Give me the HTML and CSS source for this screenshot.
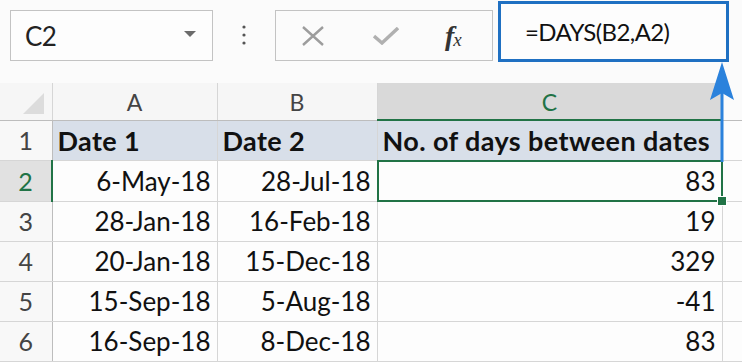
FILE: index.html
```html
<!DOCTYPE html>
<html lang="en">
<head>
    <meta charset="UTF-8">
    <title>DAYS formula</title>
    <link rel="stylesheet" href="styles.css">
</head>
<body>
    <div class="toolbar">
        <div class="namebox">
            <span>C2</span>
            <svg class="caret" width="14" height="8" viewBox="0 0 14 8"><path d="M1 1 H13 L7 7 Z" fill="#6b6b6b"/></svg>
        </div>
        <svg class="dots" width="6" height="24" viewBox="0 0 6 24">
            <circle cx="3" cy="3" r="1.6" fill="#555"/>
            <circle cx="3" cy="11" r="1.6" fill="#555"/>
            <circle cx="3" cy="19" r="1.6" fill="#555"/>
        </svg>
        <div class="fxbuttons">
            <svg class="icon-x" width="24" height="20" viewBox="0 0 24 20"><path d="M2 1 L22 19 M22 1 L2 19" stroke="#9d9d9d" stroke-width="2.4" fill="none"/></svg>
            <svg class="icon-check" width="26" height="18" viewBox="0 0 26 18"><path d="M1 9 L9 16 L25 1" stroke="#b0b0b0" stroke-width="3.4" fill="none"/></svg>
            <span class="fx">f<sub>x</sub></span>
        </div>
        <div class="formula">=DAYS(B2,A2)</div>
    </div>

    <table class="sheet">
        <colgroup>
            <col class="c-rh"><col class="c-a"><col class="c-b"><col class="c-c"><col class="c-d">
        </colgroup>
        <tr class="colhead">
            <th class="corner"><span class="tri"></span></th>
            <th>A</th>
            <th>B</th>
            <th class="active">C</th>
            <th class="blank"></th>
        </tr>
        <tr class="title">
            <th class="rh">1</th>
            <td>Date 1</td>
            <td>Date 2</td>
            <td>No. of days between dates</td>
            <td class="blank"></td>
        </tr>
        <tr class="r2">
            <th class="rh active">2</th>
            <td>6-May-18</td>
            <td>28-Jul-18</td>
            <td class="sel">83</td>
            <td class="blank"></td>
        </tr>
        <tr>
            <th class="rh">3</th>
            <td>28-Jan-18</td>
            <td>16-Feb-18</td>
            <td>19</td>
            <td class="blank"></td>
        </tr>
        <tr>
            <th class="rh">4</th>
            <td>20-Jan-18</td>
            <td>15-Dec-18</td>
            <td>329</td>
            <td class="blank"></td>
        </tr>
        <tr>
            <th class="rh">5</th>
            <td>15-Sep-18</td>
            <td>5-Aug-18</td>
            <td>-41</td>
            <td class="blank"></td>
        </tr>
        <tr>
            <th class="rh">6</th>
            <td>16-Sep-18</td>
            <td>8-Dec-18</td>
            <td>83</td>
            <td class="blank"></td>
        </tr>
    </table>

    <!-- arrow from the selected cell up to the formula bar -->
    <svg class="arrow" width="28" height="104" viewBox="0 0 28 104">
        <path d="M12 30 V102" stroke="#2b82dc" stroke-width="3" fill="none"/>
        <path d="M12 2 L24 40 L12 33 L0 40 Z" fill="#2b82dc"/>
    </svg>
</body>
</html>
```

FILE: styles.css
```css
body {
    margin: 0;
    width: 742px;
    height: 362px;
    overflow: hidden;
    position: relative;
    background-color: #fbfbfb;
    font-family: Lato, "Liberation Sans", sans-serif;
    color: #111;
}

.toolbar {
    display: flex;
    align-items: flex-start;
    height: 83px;
}

.namebox {
    box-sizing: border-box;
    margin: 10px 0 0 10px;
    width: 203px;
    height: 51px;
    border: 1px solid #c3c3c3;
    background-color: #fdfdfd;
    display: flex;
    align-items: center;
    justify-content: space-between;
    padding: 0 15px 0 14px;
    font-size: 26px;
    letter-spacing: -0.5px;
    color: #222;
}
.caret {
    margin-top: -4px;
}

.dots {
    margin: 24px 0 0 28px;
}

.fxbuttons {
    box-sizing: border-box;
    margin: 10px 0 0 28px;
    width: 218px;
    height: 51px;
    border: 1px solid #c3c3c3;
    background-color: #fbfbfb;
    display: flex;
    align-items: center;
    padding-left: 25px;
}
.icon-check {
    margin-left: 48px;
}
.fx {
    margin-left: 46px;
    font-family: "Liberation Serif", serif;
    font-style: italic;
    font-weight: bold;
    font-size: 28px;
    color: #333;
}
.fx sub {
    font-size: 19px;
    font-weight: normal;
    vertical-align: -1px;
    margin-left: -1px;
}

.formula {
    box-sizing: border-box;
    margin: 1px 0 0 5px;
    width: 231px;
    height: 61px;
    border: 3px solid #1f70c2;
    background-color: #fdfdfd;
    display: flex;
    align-items: center;
    padding-left: 24px;
    font-size: 24px;
    letter-spacing: -0.6px;
    color: #111;
}

.sheet {
    border-collapse: collapse;
    table-layout: fixed;
    width: 742px;
}
.c-rh { width: 52px; }
.c-a { width: 165px; }
.c-b { width: 160px; }
.c-c { width: 345px; }
.c-d { width: 20px; }

.sheet th, .sheet td {
    padding: 0 6px;
    border: 1px solid #d6d6d6;
    white-space: nowrap;
    overflow: visible;
}
.sheet tr {
    height: 40px;
}
.sheet tr.r2 {
    height: 41px;
}

.colhead {
    height: 37px !important;
}
.colhead th {
    border-top: none;
    border-bottom: 1px solid #bdbdbd;
    background-color: #f6f6f6;
    font-weight: normal;
    font-size: 23px;
    color: #444;
    text-align: center;
    padding-top: 2px;
}
.colhead th.active {
    background-color: #d9d9d9;
    color: #217346;
    border-bottom: 2px solid #217346;
}
.colhead th.blank {
    background-color: #fbfbfb;
    border-right: none;
}
.corner {
    position: relative;
    border-left: none !important;
}
.tri {
    position: absolute;
    right: 8px;
    bottom: 6px;
    width: 0;
    height: 0;
    border-left: 21px solid transparent;
    border-bottom: 21px solid #dcdcdc;
}

.rh {
    border-left: none !important;
    border-right: 1px solid #bdbdbd !important;
    background-color: #f8f8f8;
    font-weight: normal;
    font-size: 25px;
    color: #444;
    text-align: center;
}
.rh.active {
    background-color: #e1e1e1;
    color: #217346;
    border-right: 2px solid #217346 !important;
}

.sheet td {
    font-size: 26px;
    text-align: right;
    background-color: #fdfdfd;
}
.sheet td.blank {
    border-right: none;
}

.title td {
    background-color: #d8dfe9;
    text-align: left;
    font-weight: bold;
    font-size: 27px;
    letter-spacing: 0.4px;
    padding-left: 5px;
}
.title td.blank {
    background-color: #fdfdfd;
}

.sel {
    position: relative;
}
.sel::after {
    content: "";
    position: absolute;
    left: -1px;
    top: -1px;
    right: -1px;
    bottom: -1px;
    border: 2px solid #217346;
}
.sel::before {
    content: "";
    position: absolute;
    right: -5px;
    bottom: -5px;
    width: 8px;
    height: 8px;
    background-color: #217346;
    border: 1px solid #fff;
    z-index: 1;
}

.arrow {
    position: absolute;
    left: 710px;
    top: 60px;
}
```
